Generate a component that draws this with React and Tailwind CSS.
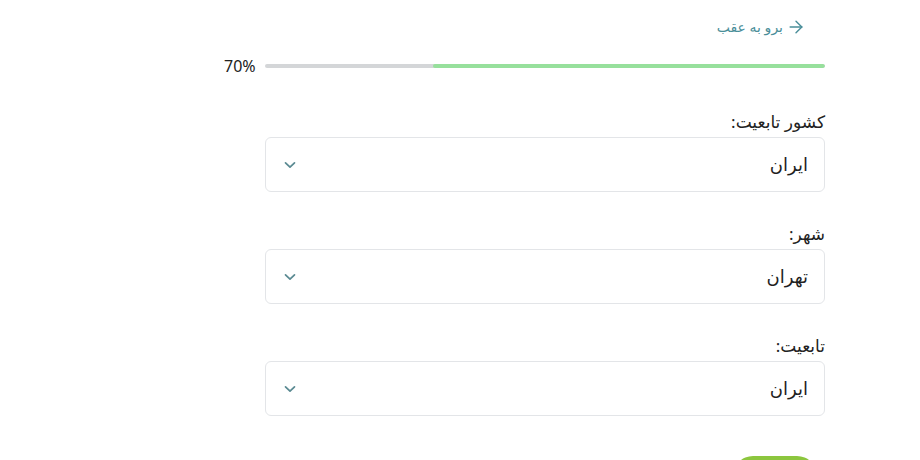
import React, { useState } from 'react';
import { ArrowRight } from 'lucide-react';

const font = { fontFamily: '"Noto Sans", "DejaVu Sans", sans-serif' };

const Chevron = () => (
  <svg width="12" height="8" viewBox="0 0 12 8" fill="none" className="text-[#5a8a92]">
    <path d="M1.5 1.8 6 6.2l4.5-4.4" stroke="currentColor" strokeWidth="1.7" strokeLinecap="round" strokeLinejoin="round" />
  </svg>
);

const SelectField = ({ label, value }) => (
  <div className="flex flex-col">
    <label className="h-6 text-[17px] leading-6 text-[#222]">{label}</label>
    <button className="mt-[3px] flex h-[55px] w-full items-center justify-between rounded-md border border-[#e3e5e8] bg-white pl-[18px] pr-[16px]">
      <span className="text-[18px] text-[#1f1f1f]">{value}</span>
      <Chevron />
    </button>
  </div>
);

export default function App() {
  const [progress] = useState(70);

  return (
    <div dir="rtl" style={font} className="h-[460px] w-[920px] overflow-hidden bg-white pr-[95px]">
      <div className="w-[560px] pt-[17px]">
        {/* Back link */}
        <a href="#" className="flex h-5 items-center gap-[3px] pr-[19px] text-[14px] leading-5 text-[#4a8e99]">
          <ArrowRight size={20} strokeWidth={1.7} className="shrink-0" />
          <span>برو به عقب</span>
        </a>

        {/* Progress */}
        <div className="mt-[17px] flex h-6 w-[601px] items-center gap-2">
          <div className="flex h-1 flex-1 overflow-hidden rounded-full bg-[#d4d6d8]">
            <div className="h-full rounded-full bg-[#97e09c]" style={{ width: `${progress}%` }} />
          </div>
          <span dir="ltr" className="w-[33px] text-left text-[16px] text-[#222]">{progress}%</span>
        </div>

        <div className="mt-[32px] flex flex-col gap-[30px]">
          <SelectField label="کشور تابعیت:" value="ایران" />
          <SelectField label="شهر:" value="تهران" />
          <SelectField label="تابعیت:" value="ایران" />
        </div>

        <div className="mt-[40px] flex pr-2">
          <button className="flex h-10 w-[84px] items-end justify-center rounded-full bg-[#8cc63e] pb-1 text-[14px] leading-5 text-white">ادامه</button>
        </div>
      </div>
    </div>
  );
}
